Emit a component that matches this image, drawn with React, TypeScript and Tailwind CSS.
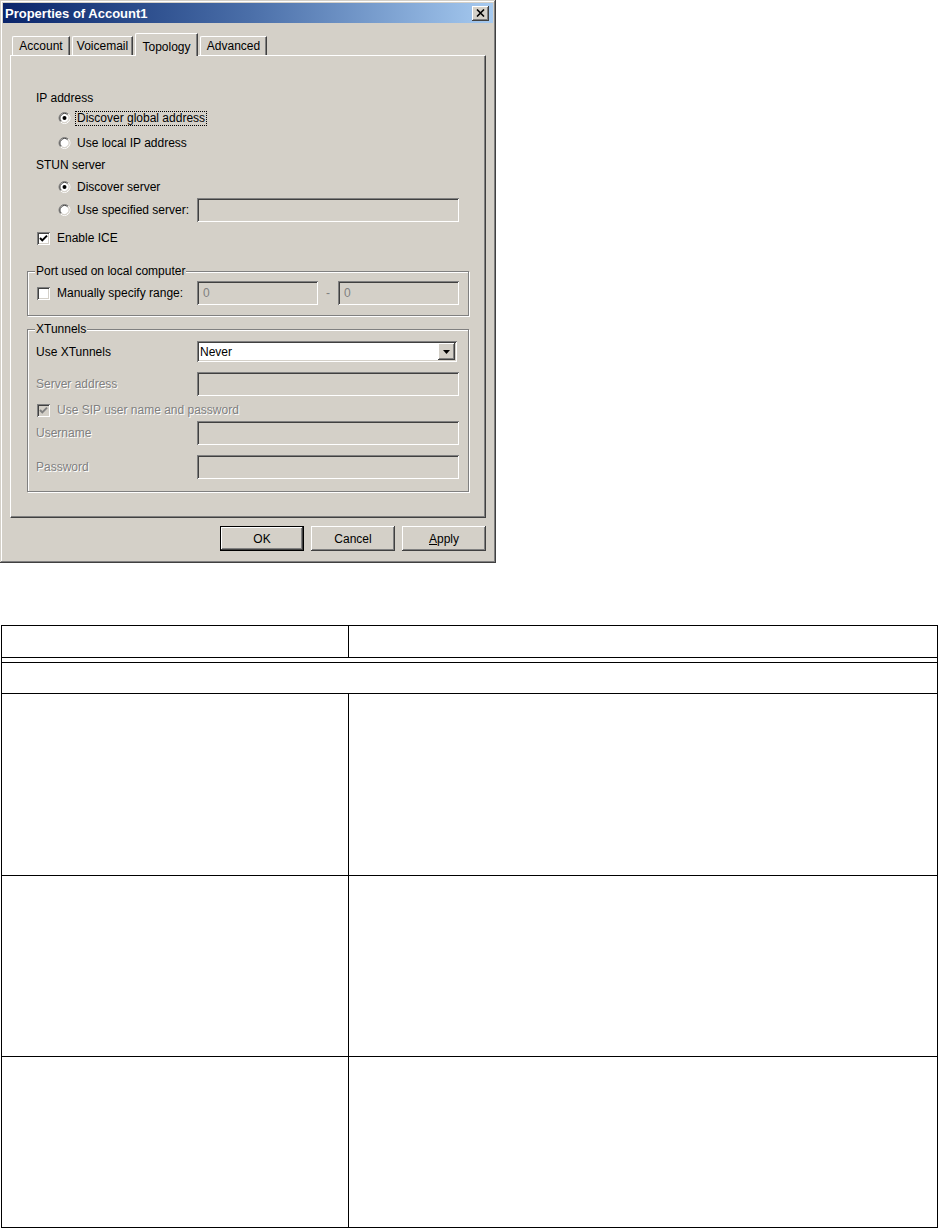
import React from "react";

const raised =
  "shadow-[inset_-1px_-1px_#404040,inset_1px_1px_#ffffff,inset_-2px_-2px_#808080,inset_2px_2px_#d4d0c8]";
const sunken =
  "shadow-[inset_1px_1px_#808080,inset_-1px_-1px_#ffffff,inset_2px_2px_#404040,inset_-2px_-2px_#d4d0c8]";
const grayed = "text-[#808080] [text-shadow:1px_1px_0_#ffffff]";

function Radio({ checked }: { checked?: boolean }) {
  return (
    <svg width="13" height="12" viewBox="0 0 12 12" className="shrink-0">
      <circle cx="6" cy="6" r="4.5" fill="#ffffff" />
      <path d="M2.11 9.89 A5.5 5.5 0 0 1 9.89 2.11" stroke="#808080" fill="none" />
      <path d="M9.89 2.11 A5.5 5.5 0 0 1 2.11 9.89" stroke="#ffffff" fill="none" />
      <path d="M2.82 9.18 A4.5 4.5 0 0 1 9.18 2.82" stroke="#404040" fill="none" />
      <path d="M9.18 2.82 A4.5 4.5 0 0 1 2.82 9.18" stroke="#d4d0c8" fill="none" />
      {checked && <circle cx="6" cy="6" r="2" fill="#000000" />}
    </svg>
  );
}

function Check({ checked, disabled }: { checked?: boolean; disabled?: boolean }) {
  return (
    <div className={`w-[13px] h-[13px] shrink-0 ${sunken} ${disabled ? "bg-[#d4d0c8]" : "bg-white"}`}>
      {checked && (
        <svg width="13" height="13" viewBox="0 0 13 13">
          <path
            d="M3 6 L5.3 8.4 L10 3.6"
            stroke={disabled ? "#808080" : "#000000"}
            strokeWidth="2"
            fill="none"
          />
        </svg>
      )}
    </div>
  );
}

function Field({ w, value }: { w: string; value?: string }) {
  return (
    <div className={`${w} h-[24px] shrink-0 bg-[#d4d0c8] ${sunken} flex items-center pl-[6px] ${grayed} [text-shadow:none]`}>
      {value}
    </div>
  );
}

function Btn({ label, def }: { label: React.ReactNode; def?: boolean }) {
  return (
    <div
      className={`w-[84px] h-[25px] flex items-center justify-center ${
        def ? "border border-black" : ""
      } ${raised}`}
    >
      {label}
    </div>
  );
}

function Tab({ label, w, active }: { label: string; w: string; active?: boolean }) {
  if (active) {
    return (
      <div className={`${w} relative z-10 -mb-[1px] h-[23px] flex items-start justify-center pt-[4px] bg-[#d4d0c8] border-t border-l border-white rounded-tl-[2px] border-r border-r-[#404040] shadow-[inset_-1px_0_#808080]`}>
        {label}
      </div>
    );
  }
  return (
    <div className={`${w} h-[19px] flex items-center justify-center border-t border-l border-white rounded-tl-[2px] border-r border-r-[#404040] shadow-[inset_-1px_0_#808080]`}>
      {label}
    </div>
  );
}

export default function App() {
  return (
    <div className="bg-white min-h-[1228px] text-[12px] text-black font-['Liberation_Sans',Arial,sans-serif]">
      {/* dialog */}
      <div className="w-[496px] h-[563px] p-[3px] bg-[#d4d0c8] shadow-[inset_-1px_-1px_#404040,inset_1px_1px_#d4d0c8,inset_-2px_-2px_#808080,inset_2px_2px_#ffffff] flex flex-col">
        <div className="h-[20px] flex items-center justify-between pl-[2px] pr-[4px] bg-linear-to-r from-[#0a246a] via-[#4a6ea8] to-[#a6caf0]">
          <span className="text-white font-bold text-[13px] leading-none">Properties of Account1</span>
          <div className={`w-[17px] h-[15px] bg-[#d4d0c8] ${raised} flex items-center justify-center`}>
            <svg width="9" height="8" viewBox="0 0 9 8">
              <path d="M1 0.5 L8 7.5 M8 0.5 L1 7.5" stroke="#000000" strokeWidth="1.6" />
            </svg>
          </div>
        </div>

        {/* tabs */}
        <div className="mt-[10px] h-[22px] ml-[9px] flex items-end gap-[2px]">
          <Tab label="Account" w="w-[58px]" />
          <Tab label="Voicemail" w="w-[61px]" />
          <Tab label="Topology" w="w-[63px]" active />
          <Tab label="Advanced" w="w-[67px]" />
        </div>

        {/* panel */}
        <div className="ml-[7px] w-[476px] h-[463px] border-t border-l border-white border-r border-b border-r-[#404040] border-b-[#404040] shadow-[inset_-1px_-1px_#808080] pl-[16px] flex flex-col">
          <div className="mt-[32px] h-[20px] pl-[9px] flex items-center">IP address</div>
          <div className="h-[20px] pl-[31px] flex items-center gap-[4px]">
            <Radio checked />
            <span className="border border-dotted border-black px-[1px] leading-[13px]">Discover global address</span>
          </div>
          <div className="mt-[5px] h-[20px] pl-[31px] flex items-center gap-[4px]">
            <Radio />
            <span className="border border-transparent px-[1px]">Use local IP address</span>
          </div>
          <div className="mt-[2px] h-[20px] pl-[9px] flex items-center">STUN server</div>
          <div className="mt-[2px] h-[20px] pl-[31px] flex items-center gap-[4px]">
            <Radio checked />
            <span className="border border-transparent px-[1px]">Discover server</span>
          </div>
          <div className="mt-[1px] h-[24px] pl-[31px] flex items-center">
            <div className="w-[139px] flex items-center gap-[4px]">
              <Radio />
              <span className="border border-transparent px-[1px]">Use specified server:</span>
            </div>
            <Field w="w-[262px]" />
          </div>
          <div className="mt-[6px] h-[20px] pl-[10px] flex items-center gap-[7px]">
            <Check checked />
            <span>Enable ICE</span>
          </div>

          <fieldset className="mt-[16px] w-[442px] border border-[#808080] shadow-[inset_1px_1px_#ffffff,1px_1px_#ffffff] pl-[9px] pb-[10px]">
            <legend className="-ml-[2px] px-[1px] leading-[14px] bg-[#d4d0c8]">Port used on local computer</legend>
            <div className="mt-[3px] h-[24px] flex items-center">
              <div className="w-[160px] flex items-center gap-[7px]">
                <Check />
                <span>Manually specify range:</span>
              </div>
              <Field w="w-[121px]" value="0" />
              <div className={`w-[20px] text-center ${grayed} [text-shadow:none]`}>-</div>
              <Field w="w-[121px]" value="0" />
            </div>
          </fieldset>

          <fieldset className="mt-[6px] w-[442px] border border-[#808080] shadow-[inset_1px_1px_#ffffff,1px_1px_#ffffff] pl-[8px] pb-[12px]">
            <legend className="-ml-[1px] px-[1px] leading-[14px] bg-[#d4d0c8]">XTunnels</legend>
            <div className="mt-[5px] h-[21px] flex items-center">
              <div className="w-[161px]">Use XTunnels</div>
              <div className={`w-[260px] h-[21px] bg-white ${sunken} flex items-center justify-between pl-[3px] pr-[2px]`}>
                <span>Never</span>
                <div className={`w-[17px] h-[17px] bg-[#d4d0c8] ${raised} flex items-center justify-center`}>
                  <svg width="7" height="4" viewBox="0 0 7 4">
                    <path d="M0 0 H7 L3.5 4 Z" fill="#000000" />
                  </svg>
                </div>
              </div>
            </div>
            <div className="mt-[10px] h-[24px] flex items-center">
              <div className={`w-[161px] ${grayed}`}>Server address</div>
              <Field w="w-[262px]" />
            </div>
            <div className="mt-[4px] h-[20px] pl-[1px] flex items-center gap-[7px]">
              <Check checked disabled />
              <span className={grayed}>Use SIP user name and password</span>
            </div>
            <div className="mt-[1px] h-[24px] flex items-center">
              <div className={`w-[161px] ${grayed}`}>Username</div>
              <Field w="w-[262px]" />
            </div>
            <div className="mt-[10px] h-[24px] flex items-center">
              <div className={`w-[161px] ${grayed}`}>Password</div>
              <Field w="w-[262px]" />
            </div>
          </fieldset>
        </div>

        {/* buttons */}
        <div className="mt-[8px] ml-[7px] w-[476px] flex justify-end gap-[7px]">
          <Btn label="OK" def />
          <Btn label="Cancel" />
          <Btn label={<span><span className="underline">A</span>pply</span>} />
        </div>
      </div>

      {/* table */}
      <div className="mt-[62px] ml-[1px] w-[937px] border border-black">
        <div className="h-[32px] flex border-b border-black">
          <div className="w-[347px] border-r border-black" />
          <div className="flex-1" />
        </div>
        <div className="h-[4px]" />
        <div className="h-[32px] border-y border-black" />
        <div className="h-[182px] flex border-b border-black">
          <div className="w-[347px] border-r border-black" />
          <div className="flex-1" />
        </div>
        <div className="h-[181px] flex border-b border-black">
          <div className="w-[347px] border-r border-black" />
          <div className="flex-1" />
        </div>
        <div className="h-[170px] flex">
          <div className="w-[347px] border-r border-black" />
          <div className="flex-1" />
        </div>
      </div>
    </div>
  );
}
